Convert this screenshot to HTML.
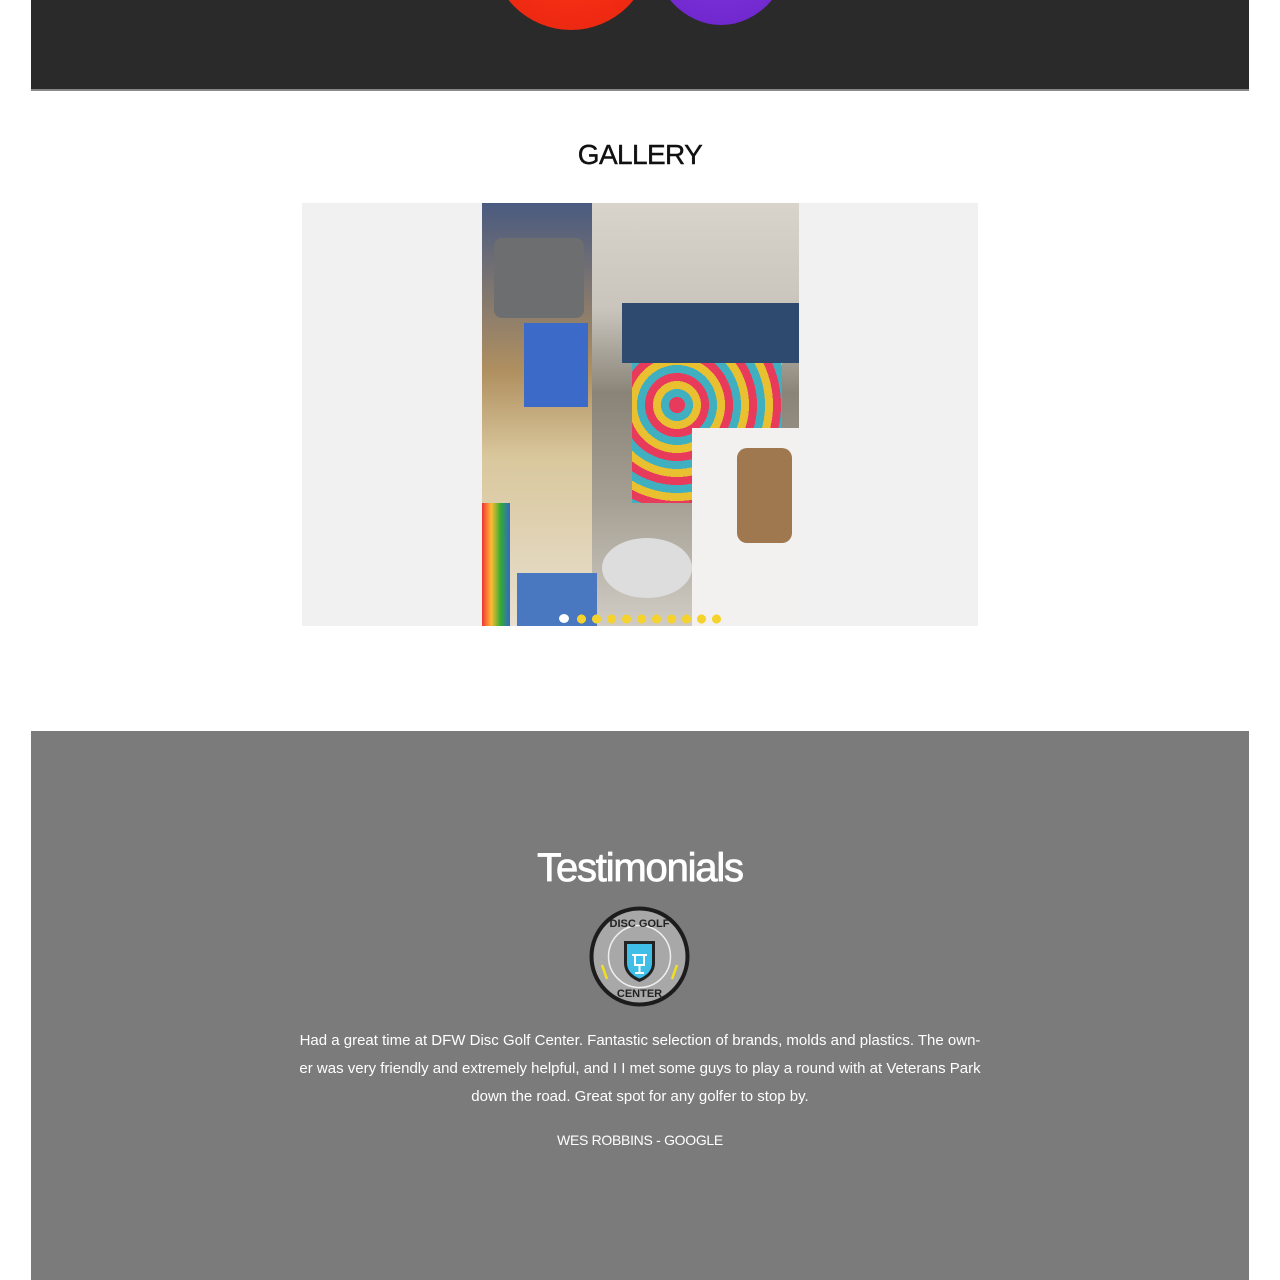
<!DOCTYPE html>
<html><head><meta charset="utf-8"><style>
body{margin:0;width:1280px;height:1280px;background:#fff;font-family:"Liberation Sans",sans-serif;position:relative;overflow:hidden}
.abs{position:absolute}
</style></head><body>
<div class="abs" style="left:31px;top:0;width:1218px;height:89px;background:#2a2a2a;overflow:hidden">
 <div class="abs" style="left:460px;top:-130px;width:160px;height:160px;border-radius:50%;background:radial-gradient(circle at 50% 40%,#ff3a1c,#e8230e)"></div>
 <div class="abs" style="left:620px;top:-135px;width:140px;height:160px;border-radius:50%;background:radial-gradient(circle at 50% 40%,#8a3fe6,#6a22c9)"></div>
</div>
<div class="abs" style="left:31px;top:89px;width:1218px;height:2px;background:#888"></div>
<div class="abs" style="left:0;top:139px;width:1280px;text-align:center;font-size:28px;color:#111;letter-spacing:-0.6px;-webkit-text-stroke:0.4px #111">GALLERY</div>
<div class="abs" style="left:302px;top:203px;width:676px;height:423px;background:#f1f1f1"></div>
<div class="abs" style="left:482px;top:203px;width:317px;height:423px;overflow:hidden;background:linear-gradient(180deg,#d8d4cc 0%,#c9c5bd 25%,#8a8478 45%,#a59f93 70%,#d0ccc4 100%)">
 <div class="abs" style="left:0;top:0;width:110px;height:423px;background:linear-gradient(180deg,#4a5a80,#b09060 40%,#d9c79c 60%,#e8e0d0)"></div>
 <div class="abs" style="left:12px;top:35px;width:90px;height:80px;background:#6c6e70;border-radius:8px"></div>
 <div class="abs" style="left:42px;top:120px;width:64px;height:84px;background:#3b6ac8"></div>
 <div class="abs" style="left:140px;top:100px;width:177px;height:60px;background:#2e4a6e"></div>
 <div class="abs" style="left:150px;top:160px;width:150px;height:140px;background:repeating-radial-gradient(circle at 30% 30%,#e83a5a 0 8px,#40b0c0 8px 16px,#e8c030 16px 24px)"></div>
 <div class="abs" style="left:210px;top:225px;width:107px;height:198px;background:#f3f1ef"></div>
 <div class="abs" style="left:255px;top:245px;width:55px;height:95px;background:#a07850;border-radius:10px"></div>
 <div class="abs" style="left:120px;top:335px;width:90px;height:60px;background:#ddd;border-radius:50%"></div>
 <div class="abs" style="left:35px;top:370px;width:80px;height:53px;background:#4a78c0"></div>
 <div class="abs" style="left:0;top:300px;width:28px;height:123px;background:linear-gradient(90deg,#e33,#fb3,#3a3,#36c)"></div>
</div>
<div class="abs" style="left:559px;top:614px;width:10px;height:9px;border-radius:50%;background:#fff"></div>
<div class="abs" style="left:574px;top:614px;height:10px;width:150px;background:radial-gradient(circle 4.6px,#f5d22c 95%,transparent) 0 0/15px 10px repeat-x"></div>
<div class="abs" style="left:31px;top:731px;width:1218px;height:549px;background:#7b7b7b"></div>
<div class="abs" style="left:0;top:846px;width:1280px;text-align:center;font-size:40px;color:#fff;letter-spacing:-1.2px;-webkit-text-stroke:0.8px #fff">Testimonials</div>
<svg class="abs" style="left:588px;top:905px" width="103" height="103" viewBox="0 0 103 103">
 <circle cx="51.5" cy="51.5" r="50" fill="#1c1c1c"/>
 <circle cx="51.5" cy="51.5" r="46" fill="#a8a8a8"/>
 <circle cx="51.5" cy="51.5" r="31" fill="none" stroke="#eee" stroke-width="1.5"/>
 <path d="M36 36h31v22c0 10-8 16-15.5 19C44 74 36 68 36 58z" fill="#222"/>
 <path d="M39 39h25v19c0 8-6 13-12.5 15.5C45 71 39 66 39 58z" fill="#3fbfe8"/>
 <path d="M44 50h15M47 50v10h9v-10M51.5 60v8M47 68h9" stroke="#fff" stroke-width="2" fill="none"/>
 <path d="M14 60l5 14M89 60l-5 14" stroke="#f0e020" stroke-width="2.5"/>
 <text x="51.5" y="22" font-size="11" font-weight="bold" text-anchor="middle" fill="#222" font-family="Liberation Sans">DISC GOLF</text>
 <text x="51.5" y="92" font-size="11" font-weight="bold" text-anchor="middle" fill="#222" font-family="Liberation Sans">CENTER</text>
</svg>
<div class="abs" style="left:240px;top:1027px;width:800px;text-align:center;font-size:15px;line-height:28px;color:#fff;letter-spacing:0;white-space:nowrap">Had a great time at DFW Disc Golf Center. Fantastic selection of brands, molds and plastics. The own-<br>er was very friendly and extremely helpful, and I I met some guys to play a round with at Veterans Park<br>down the road. Great spot for any golfer to stop by.</div>
<div class="abs" style="left:0;top:1132px;width:1280px;text-align:center;font-size:14px;color:#fff;letter-spacing:-0.3px">WES ROBBINS - GOOGLE</div>
</body></html>
